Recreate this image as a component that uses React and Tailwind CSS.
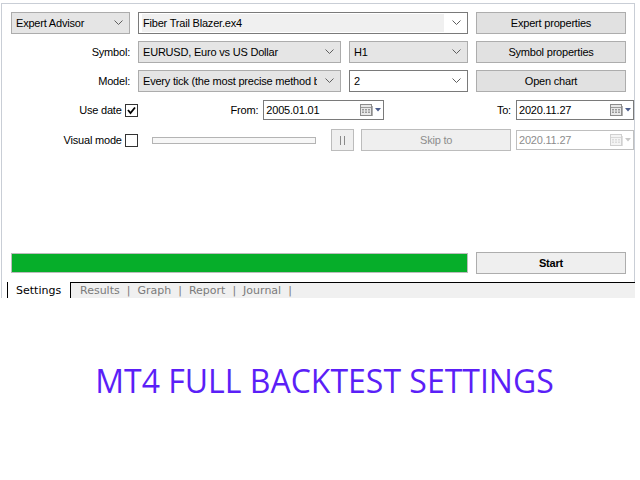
import React from 'react';

const Chevron = ({ color = '#5f5f5f' }) => (
    <svg width="9" height="6" viewBox="0 0 9 6" className="shrink-0">
        <polyline points="0.5,0.5 4.5,4.5 8.5,0.5" fill="none" stroke={color} strokeWidth="1" />
    </svg>
);

const CalendarIcon = ({ disabled }) => (
    <svg width="22" height="13" viewBox="0 0 22 13" className="shrink-0">
        <rect x="0.5" y="0.5" width="11" height="11" fill={disabled ? '#f4f4f4' : '#e8e8e8'} stroke={disabled ? '#d0d0d0' : '#8c8c8c'} />
        <line x1="1" y1="3.5" x2="11" y2="3.5" stroke={disabled ? '#d8d8d8' : '#9a9a9a'} />
        <g fill={disabled ? '#dcdcdc' : '#9a9a9a'}>
            <rect x="2" y="5" width="2" height="1.5" />
            <rect x="5" y="5" width="2" height="1.5" />
            <rect x="8" y="5" width="2" height="1.5" />
            <rect x="2" y="7.5" width="2" height="1.5" />
            <rect x="5" y="7.5" width="2" height="1.5" />
            <rect x="8" y="7.5" width="2" height="1.5" />
        </g>
        <line x1="12.5" y1="2" x2="12.5" y2="12" stroke={disabled ? '#e0e0e0' : '#b0b0b0'} />
        <polygon points="15,4 21,4 18,7.5" fill={disabled ? '#c8c8c8' : '#4b5d8c'} />
    </svg>
);

// dropdown box, the text is clipped at the arrow like the real control
const Combo = ({ text, width, white, highlight }) => (
    <div
        className={`h-[22px] flex items-center justify-between pl-[3px] pr-[6px] border ${white ? 'bg-white border-[#7a7a7a]' : 'bg-[#e5e5e5] border-[#acacac]'} shrink-0`}
        style={{ width }}
    >
        <span className={`h-[18px] flex items-center flex-1 min-w-0 pl-px mr-[8px] overflow-hidden whitespace-nowrap ${highlight ? 'bg-[#f0f0f0]' : ''}`}>
            {text}
        </span>
        <Chevron />
    </div>
);

const Button = ({ children, bold }) => (
    <div className={`w-[150px] h-[22px] shrink-0 flex items-center justify-center border border-[#adadad] ${bold ? 'font-bold bg-[#efefef]' : 'bg-[#e1e1e1]'}`}>
        {children}
    </div>
);

const DateBox = ({ value, width, disabled }) => (
    <div
        className={`h-[20px] flex items-center justify-between pl-[2px] pr-[1px] border bg-white shrink-0 ${disabled ? 'border-[#bfbfbf] text-[#8d8d8d]' : 'border-[#7a7a7a]'}`}
        style={{ width }}
    >
        <span>{value}</span>
        <CalendarIcon disabled={disabled} />
    </div>
);

const CheckBox = ({ checked }) => (
    <div className="w-[13px] h-[13px] border border-[#333] bg-white flex items-center justify-center shrink-0">
        {checked && (
            <svg width="9" height="9" viewBox="0 0 9 9">
                <polyline points="1,4 3.5,7 8,1.5" fill="none" stroke="#000" strokeWidth="1.8" />
            </svg>
        )}
    </div>
);

export default function App() {
    return (
        <div className="w-[640px] h-[480px] bg-white overflow-hidden text-[11px] tracking-[-0.2px] text-black" style={{ fontFamily: '"Liberation Sans", Arial, sans-serif' }}>
            <div className="ml-px mt-[3px] w-[634px] border-l border-t border-r border-[#c9ced6] pt-[8px] pl-[9px] pb-[8px]">
                <div className="flex items-center gap-[8px]">
                    <Combo text="Expert Advisor" width={119} />
                    <Combo text="Fiber Trail Blazer.ex4" width={330} white highlight />
                    <Button>Expert properties</Button>
                </div>

                <div className="flex items-center gap-[8px] mt-[7px]">
                    <div className="w-[119px] text-right">Symbol:</div>
                    <Combo text="EURUSD, Euro vs US Dollar" width={203} />
                    <Combo text="H1" width={119} />
                    <Button>Symbol properties</Button>
                </div>

                <div className="flex items-center gap-[8px] mt-[7px]">
                    <div className="w-[119px] text-right">Model:</div>
                    <Combo text="Every tick (the most precise method ba" width={203} />
                    <Combo text="2" width={119} white />
                    <Button>Open chart</Button>
                </div>

                <div className="flex items-center h-[20px] mt-[8px]">
                    <div className="w-[127px] flex items-center justify-end gap-[3px]">
                        <span>Use date</span>
                        <CheckBox checked />
                    </div>
                    <div className="w-[126px] text-right pr-[5px]">From:</div>
                    <DateBox value="2005.01.01" width={121} />
                    <div className="w-[132px] text-right pr-[5px]">To:</div>
                    <DateBox value="2020.11.27" width={118} />
                </div>

                <div className="flex items-center h-[22px] mt-[9px]">
                    <div className="w-[127px] flex items-center justify-end gap-[3px]">
                        <span>Visual mode</span>
                        <CheckBox />
                    </div>
                    <div className="ml-[14px] w-[165px] h-[7px] border border-[#b4b4b4] bg-[#f7f7f7]" />
                    <div className="ml-[15px] w-[23px] h-[22px] border border-[#bcbcbc] bg-[#efefef] flex items-center justify-center gap-[3px]">
                        <span className="w-px h-[9px] bg-[#8a8a8a]" />
                        <span className="w-px h-[9px] bg-[#8a8a8a]" />
                    </div>
                    <div className="ml-[7px] w-[150px] h-[22px] border border-[#bcbcbc] bg-[#efefef] flex items-center justify-center text-[#8d8d8d]">
                        Skip to
                    </div>
                    <div className="ml-[5px]">
                        <DateBox value="2020.11.27" width={118} disabled />
                    </div>
                </div>

                <div className="flex items-center gap-[8px] mt-[101px]">
                    <div className="w-[457px] h-[20px] border border-[#bcbcbc] bg-[#06ae2a]" />
                    <Button bold>Start</Button>
                </div>
            </div>

            <div className="flex w-[635px] h-[16px] text-[11px] tracking-normal" style={{ fontFamily: '"DejaVu Sans", Verdana, sans-serif' }}>
                <div className="w-[7px] h-full bg-white">
                    <div className="ml-px w-px h-full bg-[#c9ced6]" />
                </div>
                <div className="w-[64px] h-full border-l border-r border-black bg-white flex items-center pt-[2px] pl-[8px]">
                    Settings
                </div>
                <div className="flex-1 h-full border-t border-black bg-[#f0f0f0] flex items-center pt-px pl-[9px] gap-[7px] text-[#7a7a7a]">
                    <span>Results</span>
                    <span>|</span>
                    <span>Graph</span>
                    <span>|</span>
                    <span>Report</span>
                    <span>|</span>
                    <span>Journal</span>
                    <span>|</span>
                </div>
            </div>

            <div className="mt-[67px] pl-[9px] text-center text-[32px] leading-none tracking-normal text-[#5b1ff7]" style={{ fontFamily: '"Open Sans", sans-serif' }}>
                MT4 FULL BACKTEST SETTINGS
            </div>
        </div>
    );
}
